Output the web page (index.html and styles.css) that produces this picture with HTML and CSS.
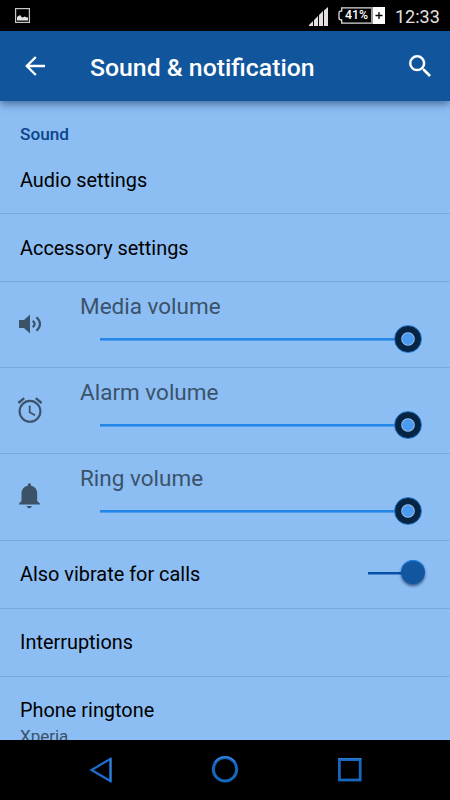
FILE: index.html
```
<!DOCTYPE html>
<html lang="en">
<head>
  <meta charset="UTF-8">
  <meta name="viewport" content="width=device-width, initial-scale=1.0">
  <title>Sound &amp; notification</title>
  <link rel="stylesheet" href="styles.css">
</head>
<body>

  <div class="status">
    <svg class="picture" width="15" height="15" viewBox="0 0 15 15">
      <rect x="0.6" y="0.6" width="13.8" height="13.8" fill="none" stroke="#c8c8c8" stroke-width="1.2"/>
      <path d="M2 12.500V9l1.500-1L5 7l1.500 2 1 .6L10 8.400l1 .9 2 .2v3z" fill="#e4e4e4"/>
    </svg>
    <svg class="signal" width="19" height="19" viewBox="0 0 19 19" fill="#e4e0e0">
      <path d="M0 19v-1l4-4v5zM5 19v-6l4-4v10zM10 19V8l4-4v15zM15 19V3.500l4-3.500v19z"/>
    </svg>
    <div class="battery">
      <svg width="47" height="17" viewBox="0 0 47 17">
        <path d="M34 .8H3.700v3.200Q1 4 1 6v5q0 2 2.700 2v3.200H34" fill="none" stroke="#dcdcdc" stroke-width="1.300"/>
        <rect x="33" y="0" width="2" height="17" fill="#999"/>
        <rect x="35" y="0" width="12" height="17" fill="#fff"/>
        <path d="M37.500 8.500h7M41 5v7" stroke="#000" stroke-width="1.300"/>
      </svg>
      <span class="percent">41%</span>
    </div>
    <span class="clock">12:33</span>
  </div>

  <header class="bar">
    <svg class="back" width="20" height="20" viewBox="0 0 20 20" fill="none" stroke="#fff" stroke-width="2.400">
      <path d="M20 10H2M10.800 1L1.800 10l9 9"/>
    </svg>
    <h1>Sound &amp; notification</h1>
    <svg class="search" width="22" height="22" viewBox="3 3 17.500 17.500" fill="#fff">
      <path d="M15.500 14h-.79l-.28-.27A6.471 6.471 0 0 0 16 9.500 6.500 6.500 0 1 0 9.500 16c1.610 0 3.090-.59 4.230-1.570l.27.280v.79l5 4.990L20.490 19l-4.990-5zm-6 0C7.010 14 5 11.990 5 9.500S7.010 5 9.500 5 14 7.010 14 9.500 11.990 14 9.500 14z"/>
    </svg>
  </header>

  <main class="list">
    <h2>Sound</h2>
    <div class="row">Audio settings</div>
    <div class="row">Accessory settings</div>

    <div class="volume">
      <svg class="icon" width="26" height="24" viewBox="0 0 26 24" fill="#3b5269">
        <path d="M2 8h5l6-5.500v19L7 16H2z"/>
        <path d="M15.700 8.800q4 3.200 0 6.400M19.500 5.300q7 6.700 0 13.400" fill="none" stroke="#3b5269" stroke-width="2.200"/>
      </svg>
      <div class="control">
        <div class="label">Media volume</div>
        <div class="slider"><span class="thumb"></span></div>
      </div>
    </div>

    <div class="volume">
      <svg class="icon" width="26" height="26" viewBox="0 0 26 26" fill="none" stroke="#3b5269">
        <circle cx="13" cy="14.300" r="10.400" stroke-width="2.100"/>
        <path d="M1.400 6L7.200 1.200M24.600 6l-5.800-4.800" stroke-width="2.400"/>
        <path d="M12.700 8.500v6.700l5.300 3" stroke-width="1.800"/>
      </svg>
      <div class="control">
        <div class="label">Alarm volume</div>
        <div class="slider"><span class="thumb"></span></div>
      </div>
    </div>

    <div class="volume">
      <svg class="icon" width="26" height="26" viewBox="0 0 26 26" fill="#3b5269">
        <path d="M2 21.500v-1L4.500 18V10.500Q4.500 4.300 10.700 2.700V2Q10.700.3 12.400.3T14.100 2v.7Q20.200 4.300 20.200 10.500V18l2.700 2.500v1zM9.700 23h5.200q-.5 2.200-2.600 2.200T9.700 23z"/>
      </svg>
      <div class="control">
        <div class="label">Ring volume</div>
        <div class="slider"><span class="thumb"></span></div>
      </div>
    </div>

    <div class="row">Also vibrate for calls
      <div class="switch"><span class="knob"></span></div>
    </div>
    <div class="row">Interruptions</div>
    <div class="row last">
      <div>Phone ringtone</div>
      <div class="summary">Xperia</div>
    </div>
  </main>

  <nav class="nav">
    <svg width="24" height="28" viewBox="0 0 24 28" fill="none" stroke="#1c6fd0" stroke-width="2.200">
      <path d="M21.300 3v22L2.500 14z"/>
      <path d="M22 2v24" stroke="#3a92f2" stroke-width="1"/>
    </svg>
    <svg width="28" height="28" viewBox="0 0 28 28" fill="none" stroke="#1766bd" stroke-width="3">
      <circle cx="14" cy="13.200" r="11.700"/>
      <path d="M4 6a12.400 12.400 0 0 1 20 0" stroke="#3688e2" stroke-width="1.200"/>
    </svg>
    <svg width="26" height="28" viewBox="0 0 26 28" fill="none" stroke="#1766bd" stroke-width="2.800">
      <rect x="2.400" y="3.600" width="20.800" height="20.400"/>
      <path d="M1 2.700h23.600" stroke="#3688e2" stroke-width="1"/>
    </svg>
  </nav>

</body>
</html>
```
FILE: styles.css
```
* {
  box-sizing: border-box;
}

body {
  margin: 0;
  width: 450px;
  height: 800px;
  overflow: hidden;
  display: flex;
  flex-direction: column;
  font-family: Roboto, "Liberation Sans", sans-serif;
  background-color: #8cbef4;
  color: #000;
}

.status {
  flex: none;
  height: 31px;
  background-color: #000;
  display: flex;
  align-items: flex-start;
  padding: 0 10px 0 15px;
  color: #e4e0e0;
}

.picture {
  margin-top: 8px;
}

.signal {
  margin: 7px 10px 0 auto;
}

.battery {
  position: relative;
  width: 47px;
  height: 17px;
  margin-top: 7px;
}

.battery svg {
  display: block;
}

.percent {
  position: absolute;
  left: 7px;
  top: 0;
  font-size: 12.3px;
  font-weight: 500;
  line-height: 17px;
  color: #fff;
}

.clock {
  width: 45px;
  margin-left: 10px;
  font-size: 18px;
  line-height: 33px;
  white-space: nowrap;
}

.bar {
  flex: none;
  position: relative;
  height: 70px;
  display: flex;
  align-items: center;
  padding: 0 19px 0 25px;
  background-color: #11569c;
  box-shadow: 0 3px 8px rgba(0, 30, 70, 0.5);
}

.bar h1 {
  flex: 1;
  margin: 3px 0 0 45px;
  font-size: 24.8px;
  font-weight: 500;
  line-height: 30px;
  color: #fff;
}

.list {
  flex: 1;
  min-height: 0;
  overflow: hidden;
}

.list h2 {
  margin: 0;
  height: 45px;
  padding: 22px 20px 0;
  font-size: 17.2px;
  font-weight: 500;
  line-height: 22px;
  color: #0b4489;
}

.row {
  display: flex;
  align-items: center;
  justify-content: space-between;
  height: 68px;
  padding: 1px 25px 0 20px;
  border-bottom: 1px solid #7ba8d8;
  font-size: 19.9px;
}

.row.last {
  display: block;
  padding-top: 21px;
  border: none;
  line-height: 26px;
}

.summary {
  font-size: 17px;
  line-height: 25px;
  color: #3b5269;
}

.volume {
  display: flex;
  align-items: center;
  height: 86.2px;
  border-bottom: 1px solid #7ba8d8;
}

.icon {
  flex: none;
  margin: 0 0 1px 17px;
}

.control {
  flex: 1;
  margin-left: 37px;
  height: 100%;
}

.label {
  padding-top: 11px;
  font-size: 22.5px;
  line-height: 27px;
  color: #3b5269;
}

.slider {
  display: flex;
  align-items: center;
  justify-content: flex-end;
  width: 322px;
  height: 28px;
  margin: 5px 0 0 20px;
  background: linear-gradient(#2586e9, #2586e9) 0 center / 300px 2.6px no-repeat;
}

.thumb {
  width: 28px;
  height: 28px;
  border: 1px solid #2878cc;
  border-radius: 50%;
  background: radial-gradient(circle, #4b9bf0 5.5px, #a5cbf4 6.2px, #062444 7.2px);
}

.switch {
  display: flex;
  align-items: center;
  justify-content: flex-end;
  width: 57px;
  height: 24px;
  margin-top: -5px;
  background: linear-gradient(#0752a5, #0752a5) 0 12px / 45px 2.5px no-repeat;
}

.knob {
  width: 24px;
  height: 24px;
  border-radius: 50%;
  background-color: #11569f;
  box-shadow: 0 2px 3px rgba(0, 20, 60, 0.6), inset 0 1px 1px #2582ea;
}

.nav {
  flex: none;
  height: 60px;
  display: flex;
  justify-content: space-between;
  align-items: center;
  padding: 0 87px 0 89px;
  background-color: #000;
}
```
